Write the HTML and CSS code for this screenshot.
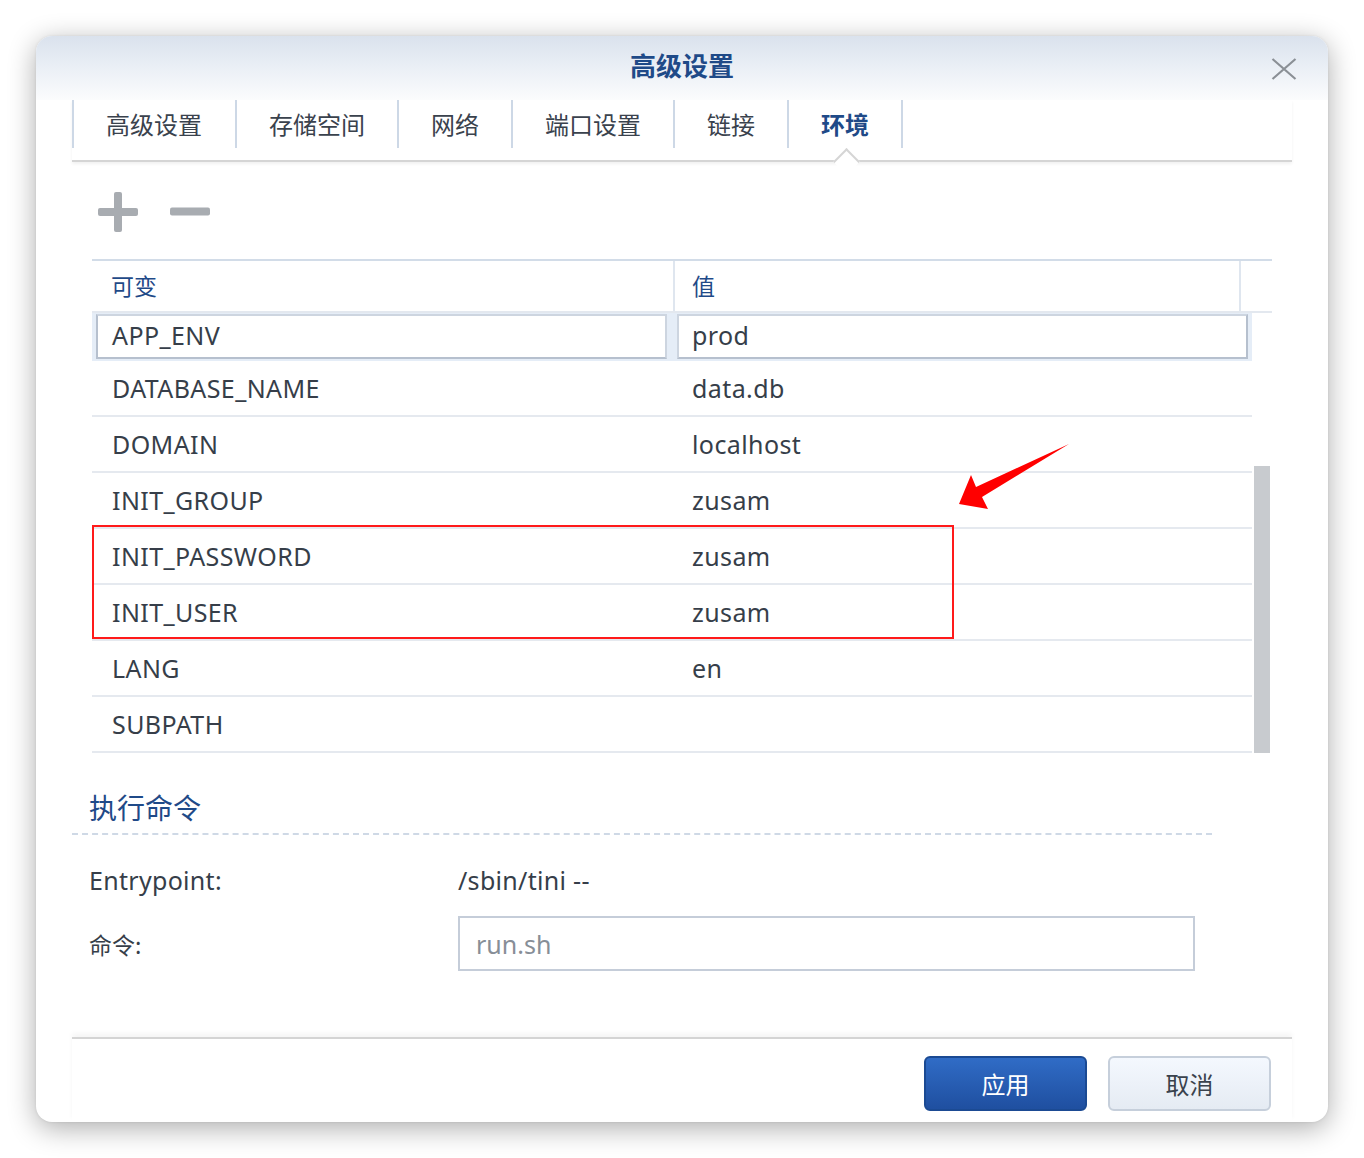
FILE: index.html
```html
<!DOCTYPE html>
<html lang="zh-CN">
<head>
<meta charset="utf-8">
<title>高级设置</title>
<link rel="stylesheet" href="styles.css">
</head>
<body>
<div class="dialog">
  <div class="titlebar">
    <div></div>
    <h1 class="title">高级设置</h1>
    <button class="close" aria-label="关闭">
      <svg width="26" height="22" viewBox="0 0 26 22"><path d="M1.5 1 L24.5 21 M24.5 1 L1.5 21" stroke="#8b9096" stroke-width="2.2" fill="none"/></svg>
    </button>
  </div>

  <div class="tabs">
    <div class="tab first">高级设置</div>
    <div class="tab">存储空间</div>
    <div class="tab">网络</div>
    <div class="tab">端口设置</div>
    <div class="tab">链接</div>
    <div class="tab active">环境</div>
  </div>

  <div class="toolbar">
    <svg class="tool-icon" width="40" height="40" viewBox="0 0 40 40"><rect x="16" y="0" width="8" height="40" rx="2"/><rect x="0" y="16" width="40" height="8" rx="2"/></svg>
    <svg class="tool-icon" width="40" height="40" viewBox="0 0 40 40"><rect x="0" y="15.5" width="40" height="8" rx="2"/></svg>
  </div>

  <div class="grid">
    <div class="grid-head">
      <div class="hcell hc1">可变</div>
      <div class="hcell hc2">值</div>
      <div class="hcell hc3"></div>
    </div>
    <div class="grid-body">
      <div class="rows">
        <div class="row editing">
          <div class="edit-box eb1">APP_ENV</div>
          <div class="edit-box eb2">prod</div>
        </div>
        <div class="row"><div class="cell c1">DATABASE_NAME</div><div class="cell c2">data.db</div></div>
        <div class="row"><div class="cell c1">DOMAIN</div><div class="cell c2">localhost</div></div>
        <div class="row"><div class="cell c1">INIT_GROUP</div><div class="cell c2">zusam</div></div>
        <div class="row"><div class="cell c1">INIT_PASSWORD</div><div class="cell c2">zusam</div></div>
        <div class="row"><div class="cell c1">INIT_USER</div><div class="cell c2">zusam</div></div>
        <div class="row"><div class="cell c1">LANG</div><div class="cell c2">en</div></div>
        <div class="row"><div class="cell c1">SUBPATH</div><div class="cell c2"></div></div>
      </div>
      <div class="scrollbar"><div class="thumb"></div></div>
    </div>
    <div class="highlight"></div>
    <svg class="arrow" width="130" height="80" viewBox="855 175 130 80">
      <polygon points="867,245 879,216 884,228 977,185 890,238 896,250" fill="#ff0000"/>
    </svg>
  </div>

  <div class="section">执行命令</div>

  <div class="form">
    <div class="form-row entry">
      <div class="label">Entrypoint:</div>
      <div class="value">/sbin/tini --</div>
    </div>
    <div class="form-row cmd">
      <div class="label cjk">命令:</div>
      <div class="input">run.sh</div>
    </div>
  </div>

  <div class="footer">
    <button class="btn primary">应用</button>
    <button class="btn">取消</button>
  </div>
</div>
</body>
</html>
```

FILE: styles.css
```css
* { box-sizing: border-box; }

html, body {
  margin: 0;
  padding: 0;
  background: #ffffff;
}

body {
  width: 1364px;
  height: 1158px;
  font-family: "Noto Sans", "Noto Sans CJK SC", sans-serif;
  color: #363e49;
}

.dialog {
  width: 1292px;
  height: 1086px;
  margin: 36px 0 0 36px;
  background: #ffffff;
  border-radius: 16px;
  box-shadow: 0 6px 28px rgba(0, 0, 0, 0.33), 0 0 3px rgba(0, 0, 0, 0.08);
  display: flex;
  flex-direction: column;
  overflow: hidden;
}

/* title bar */
.titlebar {
  height: 64px;
  display: grid;
  grid-template-columns: 1fr auto 1fr;
  align-items: center;
  background: linear-gradient(to bottom, #dae2ed 0%, #e9eef5 45%, #fbfcfd 100%);
}

.title {
  margin: 0 0 6px 0;
  font-family: "Noto Sans CJK SC", sans-serif;
  font-size: 26px;
  font-weight: 700;
  color: #1f4a88;
  line-height: 56px;
}

.close {
  justify-self: end;
  margin-right: 31px;
  margin-top: 2px;
  padding: 0;
  border: 0;
  background: none;
  width: 26px;
  height: 22px;
  display: flex;
}

/* tabs */
.tabs {
  position: relative;
  display: flex;
  margin: 0 36px;
  padding-bottom: 12px;
  border-bottom: 2px solid #d5d5d5;
  box-shadow: 0 2px 3px rgba(0, 0, 0, 0.06);
}

.tab {
  position: relative;
  height: 48px;
  padding: 0 32px;
  border-left: 2px solid #cdd8e6;
  font-family: "Noto Sans CJK SC", sans-serif;
  font-size: 24px;
  line-height: 47px;
  color: #3a424d;
  white-space: nowrap;
}

.tab.first {
  padding-right: 33px;
}

.tab:last-child {
  border-right: 2px solid #cdd8e6;
}

.tab.active {
  color: #1f4a88;
  font-weight: 700;
}

.tab.active::after {
  content: "";
  position: absolute;
  left: calc(50% - 8.5px);
  top: 52px;
  width: 17px;
  height: 17px;
  background: #ffffff;
  border-left: 2px solid #d5d5d5;
  border-top: 2px solid #d5d5d5;
  transform: rotate(45deg);
}

/* toolbar */
.toolbar {
  display: flex;
  gap: 32px;
  padding: 30px 0 27px 62px;
}

.tool-icon {
  fill: #a8acb1;
  display: block;
}

/* grid */
.grid {
  position: relative;
  margin: 0 56px;
}

.grid-head {
  display: flex;
  height: 54px;
  border-top: 2px solid #d2dce8;
  border-bottom: 2px solid #e3e8ef;
}

.hcell {
  font-family: "Noto Sans CJK SC", sans-serif;
  font-size: 23px;
  line-height: 48px;
  color: #1f4a88;
}

.hc1 {
  width: 581px;
  padding-left: 19px;
}

.hc2 {
  width: 566px;
  padding-left: 17px;
  border-left: 2px solid #dfe6ef;
}

.hc3 {
  flex: 1;
  border-left: 2px solid #dfe6ef;
}

.grid-body {
  display: flex;
}

.rows {
  width: 1160px;
}

.row {
  display: flex;
  height: 56px;
  border-bottom: 2px solid #e5e9ef;
  font-size: 25px;
  letter-spacing: 0.4px;
  color: #363e49;
}

.row.editing {
  height: 48px;
  border-bottom: 0;
  background: #e5edf7;
  padding: 1px 4px 2px 4px;
  gap: 10px;
}

.edit-box {
  width: 571px;
  background: #ffffff;
  border: 2px solid #cdd5e0;
  border-left-color: #b6c0ce;
  border-bottom-color: #b6c0ce;
  padding: 0 0 4px 14px;
  display: flex;
  align-items: center;
}

.eb2 {
  padding-left: 13px;
  border-left-color: #cdd5e0;
  border-right-color: #b6c0ce;
}

.cell {
  display: flex;
  align-items: center;
}

.c1 {
  width: 581px;
  padding-left: 20px;
}

.c2 {
  flex: 1;
  padding-left: 19px;
}

.scrollbar {
  width: 20px;
  padding-left: 2px;
}

.thumb {
  margin-top: 153px;
  width: 16px;
  height: 287px;
  background: #c8cbcf;
}

.highlight {
  position: absolute;
  left: 0;
  top: 266px;
  width: 862px;
  height: 114px;
  border: 2px solid #ff1a1a;
  pointer-events: none;
}

.arrow {
  position: absolute;
  left: 855px;
  top: 175px;
  pointer-events: none;
}

/* section */
.section {
  margin: 34px 116px 0 36px;
  padding: 0 0 6px 17px;
  border-bottom: 2px dashed #cfd9e6;
  font-family: "Noto Sans CJK SC", sans-serif;
  font-size: 28px;
  line-height: 40px;
  color: #1f4a88;
}

/* form */
.form {
  margin-left: 53px;
  display: flex;
  flex-direction: column;
  gap: 16px;
  padding-top: 25px;
}

.form-row {
  display: flex;
  align-items: center;
}

.form-row.entry {
  height: 40px;
}

.label {
  width: 369px;
  font-size: 25px;
  letter-spacing: 0.3px;
  color: #363e49;
}

.label.cjk {
  font-family: "Noto Sans CJK SC", sans-serif;
  font-size: 23px;
  letter-spacing: 0;
}

.value {
  font-size: 25px;
  letter-spacing: 0.3px;
  color: #363e49;
}

.input {
  width: 737px;
  height: 55px;
  border: 2px solid #c5cdd9;
  padding-left: 16px;
  display: flex;
  align-items: center;
  font-size: 25px;
  color: #878e97;
}

/* footer */
.footer {
  margin: auto 36px 0 36px;
  border-top: 2px solid #d4d4d4;
  box-shadow: 0 -4px 5px rgba(0, 0, 0, 0.04);
  display: flex;
  justify-content: flex-end;
  gap: 21px;
  padding: 17px 21px 11px 0;
}

.btn {
  width: 163px;
  height: 55px;
  border-radius: 6px;
  border: 2px solid #c6cfdb;
  background: linear-gradient(to bottom, #f4f8fe, #e5ebf3);
  font-family: "Noto Sans CJK SC", sans-serif;
  font-size: 24px;
  color: #3a424d;
  padding: 0;
}

.btn.primary {
  border-color: #1b4a93;
  background: linear-gradient(to bottom, #306cc6, #1f4fa0);
  color: #ffffff;
}
```
